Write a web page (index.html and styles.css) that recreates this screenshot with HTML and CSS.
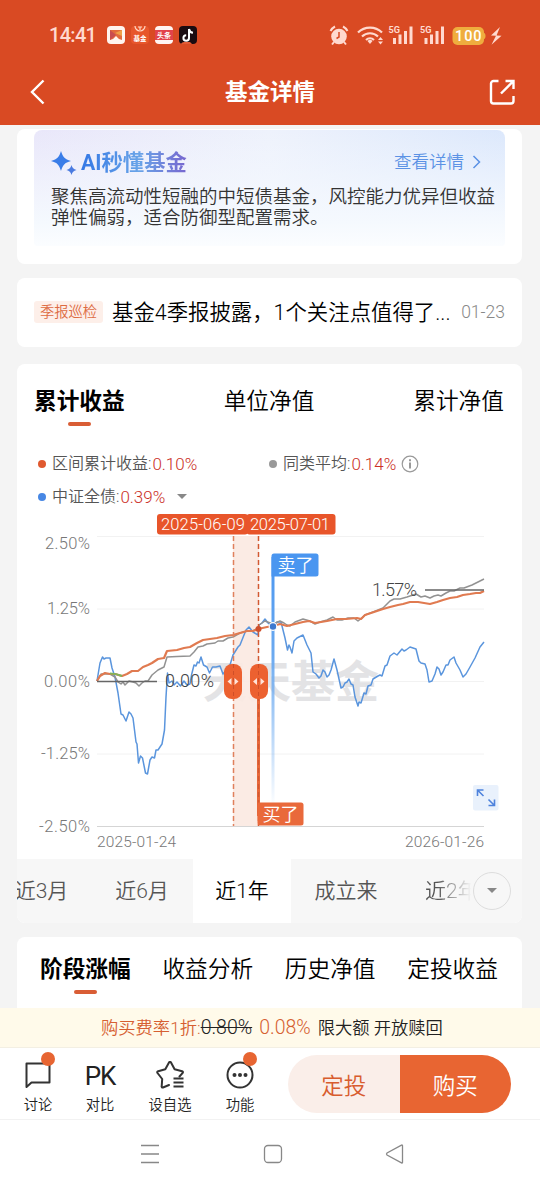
FILE: index.html
```
<!DOCTYPE html>
<html lang="zh-CN">
<head>
    <meta charset="UTF-8">
    <meta name="viewport" content="width=device-width, initial-scale=1.0">
    <title>基金详情</title>
    <link rel="stylesheet" href="styles.css">
</head>
<body>
    <header class="header">
        <div class="status">
            <span class="clock">14:41</span>
            <svg class="apps" width="92" height="20" viewBox="0 0 92 20">
                <rect x="1" y="1" width="18" height="18" rx="4" fill="#fff4ee"/>
                <path d="M4 5h12v10l-3-1-3-3-3 3-3 1z" fill="#e36a3c"/>
                <path d="M4 5l6 5-6 5z" fill="#c94e50"/>
                <path d="M9 8l7-3v6z" fill="#efa047"/>
                <rect x="25" y="1" width="18" height="18" rx="4" fill="#e7562b"/>
                <path d="M29 1a5 5 0 0 0 10 0M32 2h4M34 2v3" fill="none" stroke="#ffd9c8" stroke-width="1.2"/>
                <text x="27.500" y="16" font-size="6.500" font-weight="bold" fill="#fff">基金</text>
                <rect x="49" y="1" width="18" height="18" rx="4" fill="#fff4f2"/>
                <rect x="49" y="5" width="18" height="10" fill="#e2434b"/>
                <text x="51" y="13" font-size="7" font-weight="bold" fill="#fff">头条</text>
                <rect x="73" y="1" width="18" height="18" rx="4" fill="#1b0b10"/>
                <path d="M83 4v9a2.800 2.800 0 1 1-2.800-2.800M83 4c.3 2.200 1.700 3.500 4 3.700" fill="none" stroke="#fff" stroke-width="2"/>
                <path d="M75 19c1-2 3-2 4-2h5l2 2z" fill="#e35a34"/>
            </svg>
            <svg class="signals" width="176" height="22" viewBox="0 0 176 22">
                <g fill="#ffd9cf">
                    <circle cx="10" cy="12.500" r="7.800"/>
                    <path d="M1.500 7a11 11 0 0 1 4.500-4.500M14 2.500a11 11 0 0 1 4.500 4.500M5 18l-2 2.500M15 18l2 2.500" fill="none" stroke="#ffd9cf" stroke-width="2"/>
                    <path d="M10 8v5l-2.500 1.500" fill="none" stroke="#d94a23" stroke-width="1.500"/>
                    <g fill="none" stroke="#ffd9cf" stroke-width="2.200">
                        <path d="M29 8.500a17 17 0 0 1 24 0"/>
                        <path d="M33 12.500a11.500 11.500 0 0 1 16 0"/>
                        <path d="M37 16a6 6 0 0 1 8 0"/>
                    </g>
                    <path d="M38.500 17a3.500 3.500 0 0 1 5 0L41 20z"/>
                    <path d="M49 16l2.500-3 2.500 3zM49 17.500l2.500 3 2.500-3z"/>
                    <text x="59.500" y="9" font-size="9.500" font-weight="bold" textLength="11.500" lengthAdjust="spacingAndGlyphs">5G</text>
                    <path d="M64 14h3v6h-3zM69.500 10.500h3v9.500h-3zM75 7h3v13h-3zM80.500 2.500h3v17.500h-3z"/>
                    <text x="91" y="9" font-size="9.500" font-weight="bold" textLength="11.500" lengthAdjust="spacingAndGlyphs">5G</text>
                    <path d="M95.500 14h3v6h-3zM101 10.500h3v9.500h-3zM106.500 7h3v13h-3zM112 2.500h3v17.500h-3z"/>
                    <path d="M171 3l-9 8.500 5 .2-4.500 9 10-9-5-.3z"/>
                </g>
                <rect x="123.500" y="3" width="31.500" height="18" rx="5" fill="#efad3e"/>
                <path d="M155 9c2 0 2 6 0 6z" fill="#efad3e"/>
                <text x="126" y="17" font-size="14.500" font-weight="500" fill="#fff" textLength="26.500">100</text>
            </svg>
        </div>
        <div class="titlebar">
            <svg width="16" height="26" viewBox="0 0 16 26"><path d="M14.500 1.500L3 13l11.500 11.500" fill="none" stroke="#fff" stroke-width="2.400"/></svg>
            <h1>基金详情</h1>
            <svg width="26" height="26" viewBox="0 0 26 26">
                <path d="M9.500 2H4.500a2.500 2.500 0 0 0-2.500 2.500V22a2.500 2.500 0 0 0 2.500 2.500h17.500a2.500 2.500 0 0 0 2.500-2.500v-5M12 14.500L24 2.500M16.500 2H24.500v8" fill="none" stroke="#fff" stroke-width="2.400"/>
            </svg>
        </div>
    </header>

    <main class="content">
        <section class="card ai-card">
            <div class="ai-panel">
                <div class="ai-head">
                    <svg width="26" height="26" viewBox="0 0 26 26">
                        <path d="M10 2c1.800 6 3.500 8 10 10-6.500 1.700-8.200 4-10 10-1.800-6-3.500-8.300-10-10 6.500-2 8.200-4 10-10z" fill="#3a7de8"/>
                        <path d="M20.500 16c.9 3 2 4 5 5-3 .9-4.100 2-5 5-.9-3-2-4.100-5-5 3-1 4.100-2 5-5z" fill="#4b7be0"/>
                    </svg>
                    <span class="ai-title">AI秒懂基金</span>
                    <span class="ai-more">查看详情</span>
                    <svg class="more-arrow" width="9" height="14" viewBox="0 0 9 14"><path d="M1.500 1L7.500 7l-6 6" fill="none" stroke="#5b92e5" stroke-width="1.500"/></svg>
                </div>
                <p>聚焦高流动性短融的中短债基金，风控能力优异但收益<br>弹性偏弱，适合防御型配置需求。</p>
            </div>
        </section>

        <section class="card notice">
            <span class="tag">季报巡检</span>
            <span class="notice-text">基金4季报披露，1个关注点值得了...</span>
            <span class="date">01-23</span>
        </section>

        <section class="card chart-card">
            <nav class="tabs">
                <span class="tab active">累计收益</span>
                <span class="tab">单位净值</span>
                <span class="tab">累计净值</span>
            </nav>
            <div class="legend">
                <span class="item"><i class="dot orange"></i>区间累计收益:<b>0.10%</b></span>
                <span class="item"><i class="dot gray"></i>同类平均:<b>0.14%</b>
                    <svg class="info" width="18" height="18" viewBox="0 0 18 18"><circle cx="9" cy="9" r="7.800" fill="none" stroke="#999" stroke-width="1.200"/><path d="M9 7.500v6M9 4.200v2" stroke="#999" stroke-width="2"/></svg>
                </span>
                <span class="item"><i class="dot blue"></i>中证全债:<b>0.39%</b><i class="caret"></i></span>
            </div>
            <svg class="chart" width="505" height="347" viewBox="17 512 505 347">
                <defs>
                    <linearGradient id="sell" x1="0" y1="0" x2="0" y2="1">
                        <stop offset="0" stop-color="#4a96f0"/>
                        <stop offset=".4" stop-color="#6caaf0"/>
                        <stop offset="1" stop-color="#6caaf0" stop-opacity="0"/>
                    </linearGradient>
                </defs>
                <path d="M97 536.500H484M97 609H484M97 681.500H484M97 754H484" stroke="#f2f2f2"/>
                <path d="M97 826.500H484" stroke="#d5d5d5"/>
                <text x="203" y="698" class="watermark" textLength="176">天天基金</text>

                <rect x="233" y="536" width="26" height="290" fill="#fbe9e1" fill-opacity=".9"/>

                <g class="axis" text-anchor="end">
                    <text x="90" y="549" textLength="45">2.50%</text>
                    <text x="90" y="614" textLength="43">1.25%</text>
                    <text x="90" y="687" textLength="46">0.00%</text>
                    <text x="90" y="759" textLength="49">-1.25%</text>
                    <text x="90" y="832" textLength="51">-2.50%</text>
                </g>
                <text x="97" y="847" class="day" textLength="79">2025-01-24</text>
                <text x="405" y="847" class="day" textLength="79">2026-01-26</text>

                <!-- 中证全债 -->
                <polyline class="line" stroke="#5a95dd" points="97,681 100,663 102.500,657 104,659 106,658 110,658 112,668 115,677 118,693 121,714 123,715 126,721 129,712 131,714 133,718 136,742 137,744 138.500,763 140.500,756 142.500,758 145.500,773 147.500,774 150,760 152,757 154.500,758 156,750 158,750 162,744 164.500,730 166,697 167.500,673 169,683 172,681 174,685 177,682 180.500,686 184,681 187,685 190,684 191.500,675 194,665 196,666 197.500,662 199,663 201,657 203.500,665 207,667 209.500,673 212.500,667 216,667 220,666 223,674 227,669 230,665 233,655 238,647 240,645 242,640 246,630 249,627 253,632 258,635 259,625 262,623 265,619 268,623 273,627 277,622 281,622 283,630 285,638 287.500,650 289,645 290,647 292,653 294,641 297,638 303,635 307,645 309,649 311,653 313,672 316,674 319,678 321,676 323,670 325,672 327,677 329,675 331,670 334,659 337,670 339,679 341,688 343,687 345,683 347,682 349,679 351,684 353,685 355,697 358,706 359,702 361,703 364,693 366,694 368,686 371,685 373,679 378,676 380,675 382,676 385,666 387,665 390,656 394,653 397,655 402,649 404,651 406,650 410,647 416,649 419,661 421,663 425,664 427,670 429,682 432,681 435,674 437,667 439,669 441,675 443,672 446,665 448,665 450,660 454,657 456,663 460,670 463,677 466,674 470,667 475,658 480,647 484,642"/>
                <!-- 同类平均 -->
                <polyline class="line" stroke="#929292" points="97,681 101,674 110,674 115,677 118,682 121,684 123,682 125,685 129,681 133,682 136,683 139,686 142,683 145,681 148,681 152,675 158,670 164,667 167,657 177,656.500 190,656 194,652 198,647 203,646 207,644 215,643 218,641 223,641 228,638 233,637 240,633 247,631 253,631 258,628 259,625 265,621 273,624 280,621 284,623 287,625 290,626 295,622 303,619 310,621 315,624 320,622 327,620 333,617 337,620 342,620 348,618 354,618 358,621 362,618 365,615 373,612 383,608 390,601 394,599 400,599 407,597 416,594 421,597 425,596 430,598 434,596 438,595 441,596 446,593 450,591 454,591 460,588 464,588 472,585 478,582 484,579"/>
                <!-- 本基金 -->
                <polyline class="line fund" points="97,681 100,676 105,673 110,674 115,674 122,676 127,674 132,671 138,671 143,667 148,665 152,663 158,659 164,658 167,651 177,650 184,648 190,647 197,643 203,640 210,639 217,638 225,636 233,635 240,633 247,631 253,631 258,629 267,627 273,626 280,624 287,626 295,624 303,622 309,621 315,623 321,622 327,621 337,619 346,619 357,618 361,619 365,615 377,611 383,609 390,607 398,605 403,604 410,602 418,602 424,603 430,604 437,602 443,600 450,598 457,597 463,595 470,594 476,593 480,593 484,591"/>
                <path d="M110 673.500Q116 673.500 122 676" fill="none" stroke="#7fb35a" stroke-width="2"/>

                <path d="M97 681.500H157M425 590H484" stroke="#666" stroke-width="1.500"/>
                <text x="165" y="687" class="value" textLength="49">0.00%</text>
                <text x="372" y="596" class="value" textLength="45">1.57%</text>

                <path d="M233.500 536V826" stroke="#e0805c" stroke-width="1.500" stroke-dasharray="5 3"/>
                <path d="M258.500 681V816" stroke="#e7683a" stroke-width="3"/>
                <path d="M258.500 536V826" stroke="#d25932" stroke-width="1.500" stroke-dasharray="5 3"/>

                <rect x="271.500" y="557" width="3" height="250" fill="url(#sell)"/>
                <path d="M274 553.500h42a2.500 2.500 0 0 1 2.500 2.500v18a2.500 2.500 0 0 1-2.500 2.500h-44.500V556a2.500 2.500 0 0 1 2.500-2.500z" fill="#4a96f0"/>
                <text x="277.500" y="572" class="flag">卖了</text>
                <path d="M257.500 802.500h43.500a2.500 2.500 0 0 1 2.500 2.500v18a2.500 2.500 0 0 1-2.500 2.500h-41a2.500 2.500 0 0 1-2.500-2.500z" fill="#e9693b"/>
                <text x="262.500" y="821" class="flag">买了</text>

                <circle cx="258.500" cy="629" r="3" fill="#d04f2c"/>
                <circle cx="273" cy="626.500" r="3.800" fill="#3e79cf" stroke="#fff" stroke-width="1.200"/>

                <rect x="224" y="664" width="18" height="35" rx="8" fill="#ec6130"/>
                <rect x="250" y="664" width="18" height="35" rx="8" fill="#ec6130"/>
                <path d="M231.500 678v7l-4-3.500zM234.500 678v7l4-3.500zM257 678v7l-4-3.500zM260.500 678v7l4-3.500z" fill="#ffe3d8"/>
                <path d="M233.500 664v35M258.500 664v35" stroke="#cf4e28" stroke-dasharray="4 3"/>

                <rect x="157" y="514" width="91" height="20.500" rx="3" fill="#e8552a"/>
                <rect x="246.500" y="514" width="89" height="20.500" rx="3" fill="#e8552a"/>
                <text x="161" y="530" class="pick" textLength="84">2025-06-09</text>
                <text x="250" y="530" class="pick" textLength="80">2025-07-01</text>

                <rect x="473" y="785" width="25.500" height="25.500" rx="2" fill="#e9f1fc"/>
                <path d="M477.500 796v-6h6M478 790.500l5.500 5.500M494.500 799.500v6h-6M494 805l-5.500-5.500" fill="none" stroke="#4e82dc" stroke-width="1.600"/>
            </svg>
            <div class="ranges">
                <span class="range first">近3月</span>
                <span class="range second">近6月</span>
                <span class="range on">近1年</span>
                <span class="range since">成立来</span>
                <span class="range faded">近2年</span>
                <span class="range-more"><i class="caret"></i></span>
            </div>
        </section>

        <section class="card stage">
            <nav class="tabs">
                <span class="tab active">阶段涨幅</span>
                <span class="tab">收益分析</span>
                <span class="tab">历史净值</span>
                <span class="tab">定投收益</span>
            </nav>
        </section>
    </main>

    <div class="fee">
        <span class="accent">购买费率1折:</span><del>0.80%</del>
        <span class="accent rate">0.08%</span>
        <span>限大额 开放赎回</span>
    </div>

    <footer class="actions">
        <a class="action">
            <svg width="28" height="28" viewBox="0 0 28 28"><path d="M2.500 2.500h23v19H7.500l-5 4.500z" fill="none" stroke="#333" stroke-width="2" stroke-linejoin="round"/></svg>
            <i class="badge"></i>讨论
        </a>
        <a class="action narrow">
            <span class="pk">PK</span>对比
        </a>
        <a class="action wide">
            <svg width="28" height="28" viewBox="0 0 28 28">
                <path d="M13 24l-6 2.500q-1.500 .3-1.300-1.300l.5-7.200-4.700-6q-.8-1.300.7-1.800l7.100-1.900L13 1.500q1-1.200 2 0l3.600 6.800 7.500 1.900q1.300.5.600 1.700l-3.200 3.600" fill="none" stroke="#333" stroke-width="2" stroke-linejoin="round" stroke-linecap="round"/>
                <path d="M17.500 17.500h10M17.500 21.500h10M17.500 25.500h10" stroke="#333" stroke-width="1.800"/>
            </svg>设自选
        </a>
        <a class="action narrow">
            <svg width="28" height="28" viewBox="0 0 28 28"><circle cx="14" cy="14" r="12.500" fill="none" stroke="#333" stroke-width="2"/><g fill="#333"><circle cx="8.500" cy="14" r="2"/><circle cx="14" cy="14" r="2"/><circle cx="19.500" cy="14" r="2"/></g></svg>
            <i class="badge"></i>功能
        </a>
        <div class="buttons">
            <button class="invest">定投</button>
            <button class="buy">购买</button>
        </div>
    </footer>

    <div class="navbar">
        <svg width="20" height="20" viewBox="0 0 20 20"><path d="M1 1.500h18M1 10h18M1 18.500h18" stroke="#888" stroke-width="1.300"/></svg>
        <svg width="20" height="20" viewBox="0 0 20 20"><rect x="1.500" y="1.500" width="17" height="17" rx="3.500" fill="none" stroke="#888" stroke-width="1.300"/></svg>
        <svg width="20" height="20" viewBox="0 0 20 20"><path d="M17.500 1.500v17q0 .8-1 .3L2 11q-1-1 0-2L16.500 1.200q1-.5 1 .3z" fill="none" stroke="#888" stroke-width="1.300"/></svg>
    </div>
</body>
</html>
```
FILE: styles.css
```
* { box-sizing: border-box; }
body { margin: 0; width: 540px; height: 1187px; overflow: hidden; display: flex; flex-direction: column; background: #f4f4f4; font-family: Roboto, "Noto Sans CJK SC", sans-serif; font-weight: 350; color: #111; }
h1, p { margin: 0; }
svg { display: block; flex: none; }
span { white-space: nowrap; }

.header { height: 125px; background: #d94a23; color: #fff; }
.status { height: 70px; display: flex; align-items: center; padding: 0 35px 0 49px; }
.clock { width: 57px; font-size: 20px; line-height: 24px; font-weight: 500; letter-spacing: -0.7px; color: #ffd9cf; }
.signals { margin-left: auto; }
.titlebar { height: 44px; display: flex; align-items: center; justify-content: space-between; padding: 0 25px 0 29px; }
.titlebar h1 { font-size: 22.500px; line-height: 30px; padding-left: 6px; }

.content { flex: 1; padding: 4px 18px 0 17px; }
.card { background: #fff; border-radius: 8px; }
.ai-card { height: 135px; padding: 1px 17px; margin-bottom: 14px; }
.ai-panel { height: 116px; padding: 19px 17px 0; border-radius: 8px 8px 4px 4px; background: linear-gradient(to bottom, rgba(247, 251, 254, 0), #f5f9fe 80%, #fbfdff), linear-gradient(to right, #e9e7fa, #eef2fc 50%, #dce8fc); }
.ai-head { display: flex; align-items: center; height: 27px; }
.ai-title { margin-left: 4px; padding-top: 2px; font-size: 21.300px; line-height: 26px; font-weight: bold; color: transparent; background: linear-gradient(to right, #3478e5, #69a4e8 55%, #7766cf); -webkit-background-clip: text; background-clip: text; }
.ai-more { margin-left: auto; font-size: 17.500px; line-height: 24px; color: #5b92e5; }
.more-arrow { margin: 0 7px 0 8px; }
.ai-panel p { margin-top: 11px; font-size: 18.500px; line-height: 21.500px; color: #333; white-space: nowrap; }

.notice { height: 69px; display: flex; align-items: center; padding: 0 17px; margin-bottom: 17px; }
.tag { width: 69px; height: 22px; border-radius: 3px; background: #fdefe9; color: #dd6b42; font-size: 14.300px; line-height: 22px; text-align: center; }
.notice-text { margin-left: 9px; padding-top: 1px; font-size: 21.400px; line-height: 30px; color: #000; }
.date { margin-left: auto; font-size: 17.500px; color: #888; }

.chart-card { height: 559px; margin-bottom: 14px; overflow: hidden; }
.tabs { display: flex; justify-content: space-between; padding: 22px 18px 0 17px; }
.tab { font-size: 22.700px; line-height: 32px; color: #000; }
.tab.active { font-weight: bold; color: #000; }
.tab.active::after { content: ""; display: block; width: 23px; height: 4px; margin: 4px auto 0; border-radius: 2px; background: #d95d35; }

.legend { display: grid; grid-template-columns: 231px auto; row-gap: 9px; margin-top: 26px; padding-left: 21px; height: 86px; align-content: start; }
.item { display: flex; align-items: center; font-size: 16px; line-height: 24px; color: #555; }
.item b { margin-left: 1px; font-size: 17px; font-weight: inherit; color: #cb2f26; }
.dot { width: 8px; height: 8px; border-radius: 50%; margin-right: 6px; }
.orange { background: #e0592f; }
.gray { background: #999; }
.blue { background: #4787e4; }
.info { margin-left: 5px; }
.caret { border: 5px solid transparent; border-top: 5px solid #888; border-bottom: 0; }
.item .caret { margin-left: 12px; }

.chart { margin-top: -26px; }
.watermark { font-size: 44px; font-weight: bold; fill: #e3e3e5; }
.axis { font-size: 16.500px; fill: #777; }
.day { font-size: 15.500px; fill: #777; }
.value { font-size: 18px; fill: #444; }
.pick { font-size: 16.500px; fill: #fff; }
.flag { font-size: 18px; fill: #fff; }
.line { fill: none; stroke-width: 1.500; stroke-linejoin: round; }
.fund { stroke: #e07a50; stroke-width: 2.200; }

.ranges { display: flex; height: 64px; background: #f7f7f7; }
.range { width: 98px; flex: none; font-size: 21px; line-height: 65px; text-align: center; color: #555; }
.range.first { width: 74px; text-indent: -25px; }
.range.second { width: 102px; }
.range.since { width: 110px; }
.range.on { background: #fff; color: #000; }
.range.faded { width: 80px; padding-left: 24px; text-align: left; color: transparent; background: linear-gradient(to right, #555 45%, #f7f7f7 88%); -webkit-background-clip: text; background-clip: text; }
.range-more { width: 38px; height: 38px; margin: 13px 0 0 -8px; display: flex; flex: none; align-items: center; justify-content: center; border: 1px solid #ddd; border-radius: 50%; background: #f7f7f7; }

.stage { height: 71px; border-radius: 8px 8px 0 0; }
.stage .tabs { padding: 17px 24px 0 23px; }

.fee { height: 41px; display: flex; align-items: center; padding-left: 101px; background: #fffaea; border-bottom: 1px solid #f3efe3; font-size: 17.300px; line-height: 24px; color: #222; }
.fee .accent { color: #d65f31; }
.fee del, .fee .rate { font-size: 19.500px; }
.fee .rate { margin: 0 7px; }

.actions { height: 72px; display: flex; background: #fff; border-bottom: 1px solid #f2f2f2; padding-left: 5px; }
.action { position: relative; width: 66px; display: flex; flex-direction: column; align-items: center; padding-top: 13px; font-size: 14.300px; line-height: 20px; color: #222; }
.narrow { width: 58px; }
.wide { width: 82px; }
.action svg, .pk { height: 28px; margin-bottom: 6px; }
.pk { font-size: 26px; line-height: 30px; letter-spacing: -1px; font-weight: normal; }
.badge { position: absolute; top: 4px; left: calc(50% + 3px); width: 14px; height: 14px; border-radius: 50%; background: #e76532; }
.buttons { display: flex; margin: 7px 0 0 auto; padding-right: 29px; }
button { width: 111.500px; height: 58px; padding: 0; border: 0; font-family: inherit; font-size: 22.500px; font-weight: inherit; }
.invest { border-radius: 29px 0 0 29px; background: #faeee9; color: #d85c2e; }
.buy { border-radius: 0 29px 29px 0; background: #e86532; color: #fff; }

.navbar { height: 67px; display: flex; align-items: center; justify-content: space-between; padding: 0 135px 0 140px; background: #fff; }
```
